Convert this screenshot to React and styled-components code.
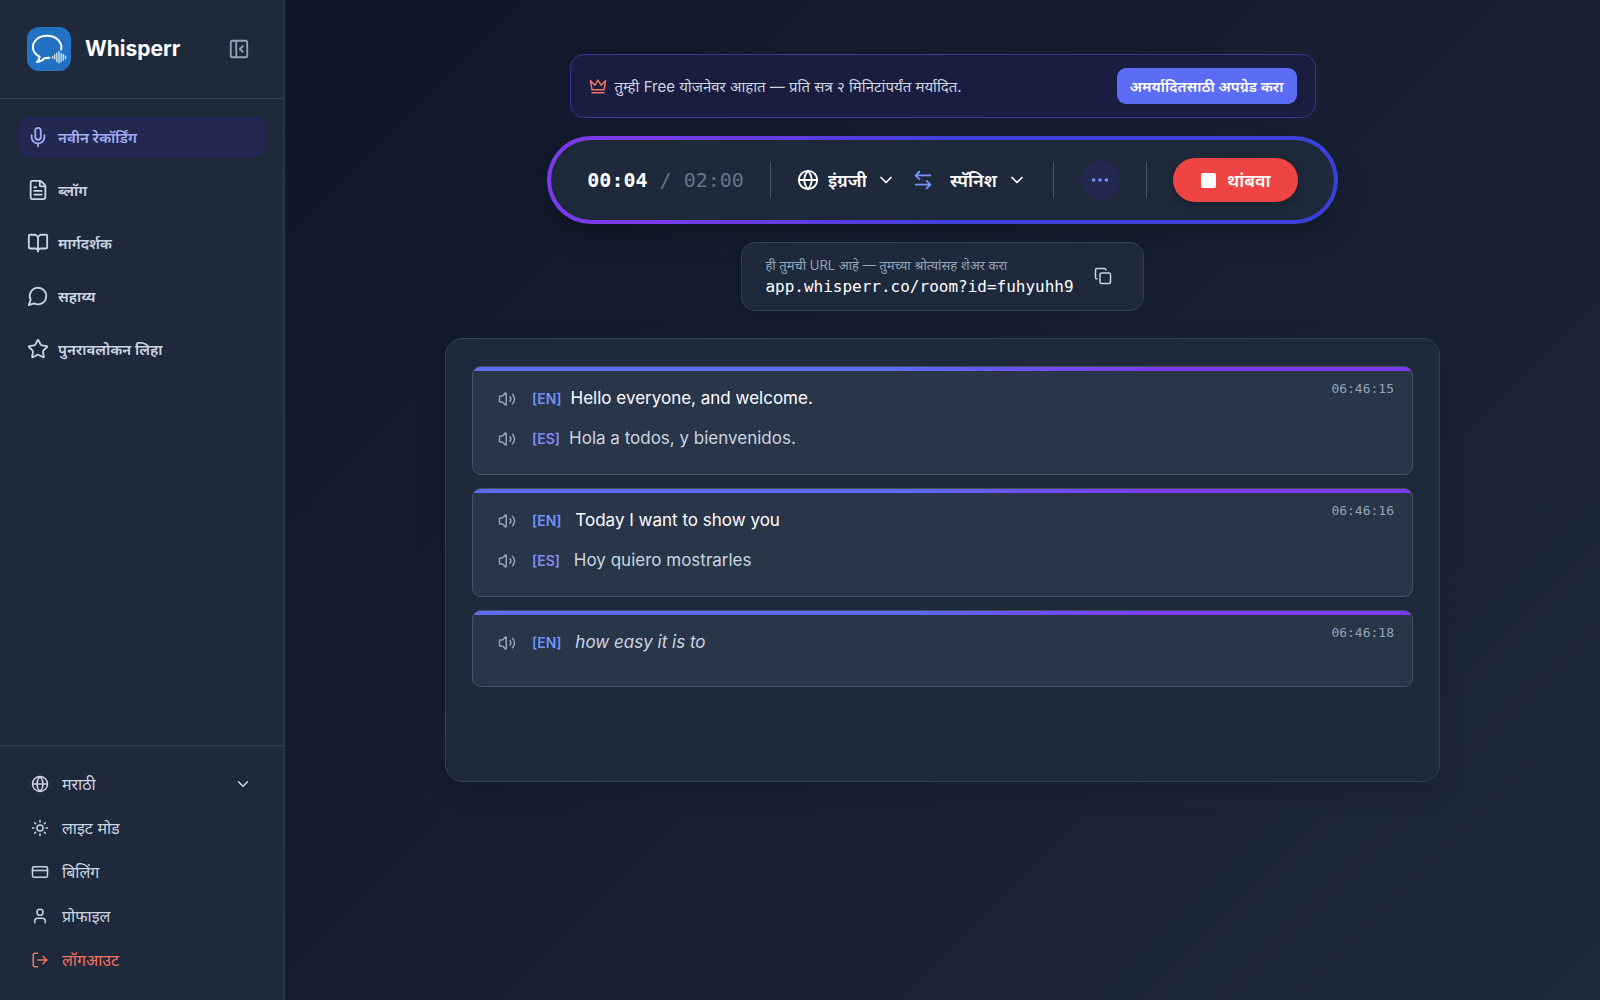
import React from "react"
import styled, { createGlobalStyle } from "styled-components"
import {
	ArrowLeftRight,
	BookOpen,
	ChevronDown,
	Copy,
	CreditCard,
	Ellipsis,
	FileText,
	Globe,
	LogOut,
	Mic,
	PanelLeftClose,
	Star,
	Sun,
	User,
	Volume2,
} from "lucide-react"

const Colors = {
	page: "#0f172a",
	surface: "#1e293b",
	raised: "#293548",
	line: "#334155",
	lineStrong: "#475569",
	text: "#cbd5e1",
	muted: "#94a3b8",
	dim: "#64748b",
	white: "#ffffff",
	indigo: "#5b6cf5",
	violet: "#7c3aed",
	danger: "#ef4444",
	coral: "#f87160",
}

const mono = `"DejaVu Sans Mono", "Liberation Mono", monospace`

const GlobalStyle = createGlobalStyle`
	* {
		box-sizing: border-box;
	}

	body {
		margin: 0;
		background: ${Colors.page};
		color: ${Colors.text};
		font-family: Inter, "Noto Sans", "Noto Sans Devanagari", sans-serif;
		font-size: 16px;
	}

	button, select {
		font: inherit;
		color: inherit;
		background: none;
		border: 0;
		padding: 0;
		margin: 0;
		cursor: pointer;
	}

	a {
		color: inherit;
		text-decoration: none;
	}

	svg {
		display: block;
		flex-shrink: 0;
	}
`

const Shell = styled.div`
	display: flex;
	min-height: 100vh;
`

const Sidebar = styled.aside`
	display: flex;
	flex-direction: column;
	flex-shrink: 0;
	width: 285px;
	background: ${Colors.surface};
	border-right: 2px solid #28364a;
`

const Brand = styled.header`
	display: flex;
	align-items: center;
	gap: 14px;
	padding: 27px 33px 27px 27px;
	border-bottom: 1px solid ${Colors.line};
`

const BrandName = styled.span`
	flex: 1;
	font-size: 21px;
	line-height: 28px;
	font-weight: 700;
	color: ${Colors.white};
`

const IconButton = styled.button`
	display: flex;
	align-items: center;
	justify-content: center;
	color: ${(props) => props.$color || Colors.muted};
`

const Nav = styled.nav`
	display: flex;
	flex-direction: column;
	flex: 1;
	gap: 13px;
	padding: 18px;
`

const NavLink = styled.a`
	display: flex;
	align-items: center;
	gap: 9px;
	height: 40px;
	padding: 0 9px;
	border-radius: 9px;
	font-size: 15px;
	font-weight: 600;
	color: ${(props) => (props.$active ? "#a3acf2" : Colors.text)};
	background: ${(props) => (props.$active ? "#232850" : "transparent")};
`

const SideFooter = styled.div`
	display: flex;
	flex-direction: column;
	padding: 15px 27px 18px;
	border-top: 2px solid #28364a;
`

const FooterItem = styled.div`
	display: flex;
	align-items: center;
	gap: 13px;
	height: 44px;
	padding: 0 4px;
	color: ${(props) => (props.$danger ? Colors.coral : Colors.text)};
`

const Select = styled.select`
	appearance: none;
	flex: ${(props) => (props.$grow ? 1 : "none")};
	font-size: ${(props) => props.$size || 16}px;
	font-weight: ${(props) => (props.$strong ? 600 : 400)};
	color: ${(props) => (props.$strong ? Colors.white : Colors.text)};

	option {
		color: #111827;
	}
`

const Main = styled.main`
	flex: 1;
	min-width: 0;
	display: flex;
	flex-direction: column;
	align-items: center;
	padding: 54px 160px;
	background: linear-gradient(135deg, ${Colors.page}, ${Colors.surface});
`

const Banner = styled.section`
	display: flex;
	align-items: center;
	gap: 8px;
	width: 100%;
	max-width: 746px;
	padding: 13px 18px;
	border: 1px solid #3a3594;
	border-radius: 14px;
	background: #191e40;
`

const BannerText = styled.p`
	flex: 1;
	margin: 0;
	font-size: 15px;
`

const UpgradeButton = styled.button`
	height: 36px;
	padding: 0 13px;
	border-radius: 9px;
	background: ${Colors.indigo};
	color: ${Colors.white};
	font-size: 15px;
	font-weight: 600;
`

const Controls = styled.section`
	display: flex;
	align-items: center;
	gap: 26px;
	height: 88px;
	margin-top: 18px;
	padding: 0 36px;
	border: 4px solid transparent;
	border-radius: 44px;
	background:
		linear-gradient(${Colors.surface}, ${Colors.surface}) padding-box,
		linear-gradient(90deg, #7c3aed 12%, #3d40d8 55%) border-box;
	box-shadow: 0 10px 26px rgba(0, 0, 0, 0.25);
`

const Timer = styled.div`
	font-family: ${mono};
	font-size: 20px;
	white-space: pre;
	color: ${Colors.dim};

	strong {
		color: ${Colors.white};
	}
`

const Divider = styled.div`
	width: 1px;
	height: 36px;
	background: ${Colors.lineStrong};
`

const Languages = styled.div`
	display: flex;
	align-items: center;
	gap: 16px;
`

const Picker = styled.label`
	display: flex;
	align-items: center;
	gap: 9px;
	color: ${Colors.white};
`

const MoreButton = styled(IconButton)`
	width: 40px;
	height: 40px;
	border-radius: 50%;
	background: #232850;
`

const StopButton = styled.button`
	display: flex;
	align-items: center;
	gap: 11px;
	height: 44px;
	padding: 0 27px 0 28px;
	border-radius: 22px;
	background: ${Colors.danger};
	color: ${Colors.white};
	font-size: 18px;
	font-weight: 600;
	box-shadow: 0 4px 12px rgba(0, 0, 0, 0.2);
`

const StopSquare = styled.span`
	width: 15px;
	height: 15px;
	border-radius: 2px;
	background: ${Colors.white};
`

const Share = styled.section`
	display: flex;
	align-items: center;
	gap: 20px;
	margin-top: 18px;
	padding: 12px 31px 13px 23px;
	border: 1px solid ${Colors.line};
	border-radius: 14px;
	background: ${Colors.surface};
	box-shadow: 0 4px 10px rgba(0, 0, 0, 0.12);
`

const ShareLabel = styled.div`
	font-size: 13px;
	line-height: 21px;
	color: ${Colors.muted};
`

const ShareUrl = styled.a`
	display: block;
	font-family: ${mono};
	font-size: 16px;
	line-height: 21px;
	color: ${Colors.white};
`

const Transcript = styled.section`
	display: flex;
	flex-direction: column;
	gap: 13px;
	width: 100%;
	max-width: 995px;
	min-height: 444px;
	margin-top: 27px;
	padding: 27px 26px;
	border: 1px solid ${Colors.line};
	border-radius: 18px;
	background: ${Colors.surface};
	box-shadow: 0 10px 26px rgba(0, 0, 0, 0.15);
`

const Entry = styled.article`
	display: flex;
	align-items: flex-start;
	min-height: 77px;
	padding: 14px 18px 21px 25px;
	border: 1px solid #445167;
	border-radius: 9px;
	background:
		linear-gradient(90deg, #5b6cf5 45%, #7c3aed 72%) top / 100% 4px no-repeat,
		${Colors.raised};
`

const Lines = styled.div`
	flex: 1;
	display: flex;
	flex-direction: column;
	gap: 10px;
	padding-top: 2px;
`

const Line = styled.div`
	display: flex;
	align-items: center;
	line-height: 28px;
`

const PlayButton = styled(IconButton)`
	padding-top: 2px;
`

const Tag = styled.span`
	margin-left: 16px;
	margin-right: 9px;
	padding-top: 2px;
	font-size: 14px;
	font-weight: 600;
	color: ${(props) => (props.$translated ? "#818cf8" : "#6f93fb")};
`

const Speech = styled.span`
	font-size: 17px;
	white-space: pre;
	font-style: ${(props) => (props.$pending ? "italic" : "normal")};
	color: ${(props) => (props.$muted ? Colors.text : Colors.white)};
`

const Time = styled.time`
	font-family: ${mono};
	font-size: 13px;
	line-height: 16px;
	color: ${Colors.muted};
`

const Logo = () => (
	<svg width="44" height="44" viewBox="0 0 44 44" fill="none" stroke="#fff" strokeLinecap="round" strokeLinejoin="round">
		<rect width="44" height="44" rx="12" fill="#2371c3" stroke="none" />
		<path strokeWidth="2" d="M34.2 22.5C35.4 14.5 29 8.8 20 8.8C11.5 8.8 5.9 14 5.9 20.3C5.9 24.4 8.4 27.6 12.6 29.6C12.6 31.8 11.7 33.5 10 35C13.2 34.7 15.7 33.3 17.6 31.2L22.5 30.8" />
		<path strokeWidth="1.3" strokeOpacity="0.85" d="M25.6 29.5v1.5M27.7 28v4M29.8 26v8.5M32 24.5v11.5M34.2 26.5v8M36.4 27.5v5.5M38.5 29v2.5" />
	</svg>
)

const Icon = ({ size, children }) => (
	<svg width={size} height={size} viewBox="0 0 24 24" fill="none" stroke="currentColor" strokeWidth="2" strokeLinecap="round" strokeLinejoin="round">
		{children}
	</svg>
)

const Bubble = ({ size }) => (
	<Icon size={size}>
		<path d="M7.9 20A9 9 0 1 0 4 16.1L2 22Z" />
	</Icon>
)

const CrownMark = styled.span`
	color: ${Colors.coral};
`

const links = [
	{ label: "नवीन रेकॉर्डिंग", icon: Mic, active: true },
	{ label: "ब्लॉग", icon: FileText },
	{ label: "मार्गदर्शक", icon: BookOpen },
	{ label: "सहाय्य", icon: Bubble },
	{ label: "पुनरावलोकन लिहा", icon: Star },
]

const entries = [
	{
		time: "06:46:15",
		lines: [
			{ lang: "EN", text: "Hello everyone, and welcome." },
			{ lang: "ES", text: "Hola a todos, y bienvenidos.", translated: true },
		],
	},
	{
		time: "06:46:16",
		lines: [
			{ lang: "EN", text: " Today I want to show you" },
			{ lang: "ES", text: " Hoy quiero mostrarles", translated: true },
		],
	},
	{
		time: "06:46:18",
		lines: [{ lang: "EN", text: " how easy it is to", pending: true }],
	},
]

const App = () => {
	return (
		<Shell>
			<GlobalStyle />
			<Sidebar>
				<Brand>
					<Logo />
					<BrandName>Whisperr</BrandName>
					<IconButton aria-label="Collapse sidebar">
						<PanelLeftClose size={22} />
					</IconButton>
				</Brand>

				<Nav>
					{links.map(({ label, icon: LinkIcon, active }) => (
						<NavLink key={label} href="#" $active={active}>
							<LinkIcon size={22} />
							{label}
						</NavLink>
					))}
				</Nav>

				<SideFooter>
					<FooterItem as="label">
						<Globe size={18} />
						<Select $grow aria-label="Interface language">
							<option>मराठी</option>
						</Select>
						<ChevronDown size={18} />
					</FooterItem>
					<FooterItem as="button">
						<Sun size={18} />
						लाइट मोड
					</FooterItem>
					<FooterItem as="a" href="#">
						<CreditCard size={18} />
						बिलिंग
					</FooterItem>
					<FooterItem as="a" href="#">
						<User size={18} />
						प्रोफाइल
					</FooterItem>
					<FooterItem as="button" $danger>
						<LogOut size={18} />
						लॉगआउट
					</FooterItem>
				</SideFooter>
			</Sidebar>

			<Main>
				<Banner>
					<CrownMark>
						<Icon size={18}>
							<path d="M2 5l2 12h16l2-12-6 6-4-7-4 7-6-6zM4 21h16" />
						</Icon>
					</CrownMark>
					<BannerText>तुम्ही Free योजनेवर आहात — प्रति सत्र २ मिनिटांपर्यंत मर्यादित.</BannerText>
					<UpgradeButton>अमर्यादितसाठी अपग्रेड करा</UpgradeButton>
				</Banner>

				<Controls>
					<Timer>
						<strong>00:04</strong> / 02:00
					</Timer>
					<Divider />
					<Languages>
						<Picker>
							<Globe size={22} />
							<Select $strong $size={18} aria-label="Spoken language">
								<option>इंग्रजी</option>
							</Select>
							<ChevronDown size={20} />
						</Picker>
						<IconButton $color="#7793fa" aria-label="Swap languages">
							<ArrowLeftRight size={22} />
						</IconButton>
						<Picker>
							<Select $strong $size={18} aria-label="Target language">
								<option>स्पॅनिश</option>
							</Select>
							<ChevronDown size={20} />
						</Picker>
					</Languages>
					<Divider />
					<MoreButton $color="#7793fa" aria-label="More options">
						<Ellipsis size={22} fill="currentColor" />
					</MoreButton>
					<Divider />
					<StopButton>
						<StopSquare />
						थांबवा
					</StopButton>
				</Controls>

				<Share>
					<div>
						<ShareLabel>ही तुमची URL आहे — तुमच्या श्रोत्यांसह शेअर करा</ShareLabel>
						<ShareUrl href="#">app.whisperr.co/room?id=fuhyuhh9</ShareUrl>
					</div>
					<IconButton $color={Colors.text} aria-label="Copy link">
						<Copy size={18} />
					</IconButton>
				</Share>

				<Transcript>
					{entries.map((entry) => (
						<Entry key={entry.time}>
							<Lines>
								{entry.lines.map((line) => (
									<Line key={line.lang}>
										<PlayButton aria-label={`Play ${line.lang}`}>
											<Volume2 size={18} />
										</PlayButton>
										<Tag $translated={line.translated}>[{line.lang}]</Tag>
										<Speech $muted={line.translated || line.pending} $pending={line.pending}>
											{line.text}
										</Speech>
									</Line>
								))}
							</Lines>
							<Time>{entry.time}</Time>
						</Entry>
					))}
				</Transcript>
			</Main>
		</Shell>
	)
}

export default App
